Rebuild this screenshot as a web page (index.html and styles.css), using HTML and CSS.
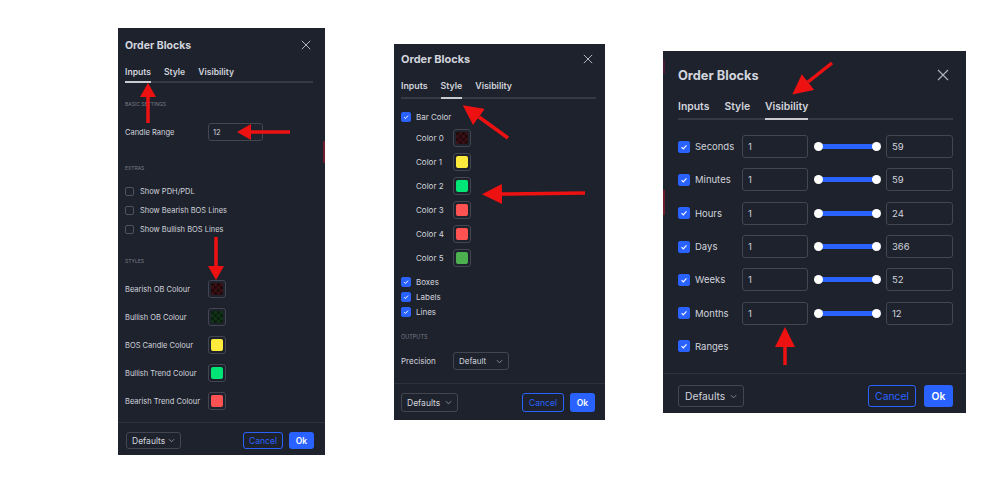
FILE: index.html
```html
<!DOCTYPE html>
<html>
<head>
  <link rel="stylesheet" href="styles.css">
</head>
<body>
  <div class="page">

    <!-- Inputs tab -->
    <div class="dlg dlg-s">
      <span class="chart-edge edge-right"></span>
      <div class="dlg-head">
        <span class="dlg-title">Order Blocks</span>
        <svg class="close" viewBox="0 0 12 12"><path d="M1 1l10 10M11 1L1 11" stroke="currentColor" stroke-width="1.2"/></svg>
      </div>
      <div class="tabs">
        <span class="tab">Inputs</span>
        <span class="tab">Style</span>
        <span class="tab">Visibility</span>
      </div>
      <div class="tab-line"><span class="tab-ind"></span></div>

      <div class="dlg-body">
        <div class="group">Basic Settings</div>
        <div class="row field-row">
          <span class="lbl">Candle Range</span>
          <span class="input">12</span>
        </div>

        <div class="group">Extras</div>
        <div class="row check-row"><span class="cb"></span><span>Show PDH/PDL</span></div>
        <div class="row check-row"><span class="cb"></span><span>Show Bearish BOS Lines</span></div>
        <div class="row check-row"><span class="cb"></span><span>Show Bullish BOS Lines</span></div>

        <div class="group">Styles</div>
        <div class="row color-row"><span class="lbl">Bearish OB Colour</span><span class="swatch"><span class="fill fill-red-t"></span></span></div>
        <div class="row color-row"><span class="lbl">Bullish OB Colour</span><span class="swatch"><span class="fill fill-green-t"></span></span></div>
        <div class="row color-row"><span class="lbl">BOS Candle Colour</span><span class="swatch"><span class="fill fill-yellow"></span></span></div>
        <div class="row color-row"><span class="lbl">Bullish Trend Colour</span><span class="swatch"><span class="fill fill-lime"></span></span></div>
        <div class="row color-row"><span class="lbl">Bearish Trend Colour</span><span class="swatch"><span class="fill fill-red"></span></span></div>
      </div>

      <div class="dlg-foot">
        <span class="btn btn-defaults">Defaults <svg class="chev" viewBox="0 0 8 5"><path d="M1 1l3 3 3-3" stroke="currentColor" fill="none"/></svg></span>
        <span class="btn btn-cancel">Cancel</span>
        <span class="btn btn-ok">Ok</span>
      </div>
    </div>

    <!-- Style tab -->
    <div class="dlg dlg-m">
      <div class="dlg-head">
        <span class="dlg-title">Order Blocks</span>
        <svg class="close" viewBox="0 0 12 12"><path d="M1 1l10 10M11 1L1 11" stroke="currentColor" stroke-width="1.2"/></svg>
      </div>
      <div class="tabs">
        <span class="tab">Inputs</span>
        <span class="tab">Style</span>
        <span class="tab">Visibility</span>
      </div>
      <div class="tab-line"><span class="tab-ind"></span></div>

      <div class="dlg-body">
        <div class="row check-row"><span class="cb on"><svg viewBox="0 0 10 10"><path d="M2.6 5.2l1.7 1.7 3.2-3.6" stroke="#fff" stroke-width="1.2" fill="none"/></svg></span><span>Bar Color</span></div>

        <div class="color-list">
          <div class="row color-row"><span class="lbl">Color 0</span><span class="swatch"><span class="fill fill-red-t"></span></span></div>
          <div class="row color-row"><span class="lbl">Color 1</span><span class="swatch"><span class="fill fill-yellow"></span></span></div>
          <div class="row color-row"><span class="lbl">Color 2</span><span class="swatch"><span class="fill fill-lime"></span></span></div>
          <div class="row color-row"><span class="lbl">Color 3</span><span class="swatch"><span class="fill fill-red"></span></span></div>
          <div class="row color-row"><span class="lbl">Color 4</span><span class="swatch"><span class="fill fill-red"></span></span></div>
          <div class="row color-row"><span class="lbl">Color 5</span><span class="swatch"><span class="fill fill-green"></span></span></div>
        </div>

        <div class="row check-row"><span class="cb on"><svg viewBox="0 0 10 10"><path d="M2.6 5.2l1.7 1.7 3.2-3.6" stroke="#fff" stroke-width="1.2" fill="none"/></svg></span><span>Boxes</span></div>
        <div class="row check-row"><span class="cb on"><svg viewBox="0 0 10 10"><path d="M2.6 5.2l1.7 1.7 3.2-3.6" stroke="#fff" stroke-width="1.2" fill="none"/></svg></span><span>Labels</span></div>
        <div class="row check-row"><span class="cb on"><svg viewBox="0 0 10 10"><path d="M2.6 5.2l1.7 1.7 3.2-3.6" stroke="#fff" stroke-width="1.2" fill="none"/></svg></span><span>Lines</span></div>

        <div class="group">Outputs</div>
        <div class="row field-row">
          <span class="lbl">Precision</span>
          <span class="select">Default <svg class="chev" viewBox="0 0 8 5"><path d="M1 1l3 3 3-3" stroke="currentColor" fill="none"/></svg></span>
        </div>
      </div>

      <div class="dlg-foot">
        <span class="btn btn-defaults">Defaults <svg class="chev" viewBox="0 0 8 5"><path d="M1 1l3 3 3-3" stroke="currentColor" fill="none"/></svg></span>
        <span class="btn btn-cancel">Cancel</span>
        <span class="btn btn-ok">Ok</span>
      </div>
    </div>

    <!-- Visibility tab -->
    <div class="dlg dlg-l">
      <span class="chart-edge edge-left edge-a"></span>
      <span class="chart-edge edge-left edge-b"></span>
      <div class="dlg-head">
        <span class="dlg-title">Order Blocks</span>
        <svg class="close" viewBox="0 0 12 12"><path d="M1 1l10 10M11 1L1 11" stroke="currentColor" stroke-width="1.1"/></svg>
      </div>
      <div class="tabs">
        <span class="tab">Inputs</span>
        <span class="tab">Style</span>
        <span class="tab">Visibility</span>
      </div>
      <div class="tab-line"><span class="tab-ind"></span></div>

      <div class="dlg-body" id="visRows"></div>

      <div class="dlg-foot">
        <span class="btn btn-defaults">Defaults <svg class="chev" viewBox="0 0 8 5"><path d="M1 1l3 3 3-3" stroke="currentColor" fill="none"/></svg></span>
        <span class="btn btn-cancel">Cancel</span>
        <span class="btn btn-ok">Ok</span>
      </div>
    </div>
  </div>

  <!-- red annotation arrows -->
  <svg class="notes" width="1000" height="500" viewBox="0 0 1000 500">
    <defs>
      <marker id="head" markerUnits="userSpaceOnUse" markerWidth="14" markerHeight="16" refX="0" refY="8" orient="auto">
        <path d="M0 0L14 8L0 16z" fill="#ee1111"/>
      </marker>
      <marker id="head-lg" markerUnits="userSpaceOnUse" markerWidth="20" markerHeight="20" refX="0" refY="10" orient="auto">
        <path d="M0 0L20 10L0 20z" fill="#ee1111"/>
      </marker>
    </defs>
    <g stroke="#ee1111" stroke-width="3.5">
      <line x1="148" y1="123" x2="148" y2="97" marker-end="url(#head)"/>
      <line x1="290" y1="132" x2="251" y2="132" marker-end="url(#head)"/>
      <line x1="216" y1="237" x2="216" y2="266" marker-end="url(#head)"/>
      <line x1="508" y1="138" x2="479" y2="117" marker-end="url(#head-lg)"/>
      <line x1="585" y1="193" x2="502" y2="194" marker-end="url(#head-lg)"/>
      <line x1="832" y1="63" x2="808" y2="82" marker-end="url(#head-lg)"/>
      <line x1="785" y1="365" x2="785" y2="347" marker-end="url(#head-lg)"/>
    </g>
  </svg>

  <script>
    // Visibility rows: label, min, max
    const ranges = [
      ['Seconds', 1, 59],
      ['Minutes', 1, 59],
      ['Hours', 1, 24],
      ['Days', 1, 366],
      ['Weeks', 1, 52],
      ['Months', 1, 12]
    ];

    const check = '<span class="cb on"><svg viewBox="0 0 10 10"><path d="M2.6 5.2l1.7 1.7 3.2-3.6" stroke="#fff" stroke-width="1.1" fill="none"/></svg></span>';
    const visRows = document.getElementById('visRows');

    ranges.forEach(([name, min, max]) => {
      const row = document.createElement('div');
      row.className = 'row vis-row';
      row.innerHTML = check +
        '<span class="lbl">' + name + '</span>' +
        '<span class="input">' + min + '</span>' +
        '<span class="slider"><span class="knob"></span><span class="knob"></span></span>' +
        '<span class="input input-max">' + max + '</span>';
      visRows.appendChild(row);
    });

    const last = document.createElement('div');
    last.className = 'row vis-row';
    last.innerHTML = check + '<span class="lbl">Ranges</span>';
    visRows.appendChild(last);
  </script>
</body>
</html>
```

FILE: styles.css
```css
body {
  margin: 0;
  background: #fff;
  font-family: Inter, "Noto Sans", sans-serif;
  color: #d1d4dc;
}

.page {
  display: flex;
  align-items: flex-start;
  padding-left: 118px;
}

.dlg {
  position: relative;
  display: flex;
  flex-direction: column;
  background: #1e222d;
}

.dlg-s {
  width: 207px;
  height: 427px;
  margin-top: 28px;
  font-size: 7.5px;
}

.dlg-m {
  width: 211px;
  height: 376px;
  margin-top: 44px;
  margin-left: 69px;
  font-size: 8px;
}

.dlg-l {
  width: 303px;
  height: 362px;
  margin-top: 51px;
  margin-left: 58px;
  font-size: 9.5px;
}

/* bits of the chart showing at the dialog edges */
.chart-edge {
  position: absolute;
  width: 2px;
  background: #6e1c2c;
}

.edge-right {
  right: 0;
  top: 113px;
  height: 22px;
}

.edge-left {
  left: 0;
}

.edge-a {
  top: 9px;
  height: 14px;
  background: #4a1a3a;
}

.edge-b {
  top: 139px;
  height: 25px;
}

/* header */
.dlg-head {
  display: flex;
  align-items: center;
  justify-content: space-between;
}

.dlg-title {
  font-weight: 700;
  color: #d1d4dc;
}

.close {
  color: #b2b5be;
}

.dlg-s .dlg-head {
  height: 34px;
  padding: 0 14px 0 7px;
}

.dlg-s .dlg-title {
  font-size: 10.5px;
}

.dlg-s .close,
.dlg-m .close {
  width: 10px;
  height: 10px;
}

.dlg-m .dlg-head {
  height: 30px;
  padding: 0 12px 0 7px;
}

.dlg-m .dlg-title {
  font-size: 11px;
}

.dlg-l .dlg-head {
  height: 48px;
  padding: 0 17px 0 15px;
}

.dlg-l .dlg-title {
  font-size: 12.8px;
}

.dlg-l .close {
  width: 12px;
  height: 12px;
}

/* tabs */
.tabs {
  display: flex;
  align-items: center;
  font-weight: 600;
}

.dlg-s .tabs {
  height: 19px;
  gap: 13px;
  padding-left: 7px;
  font-size: 8.6px;
}

.dlg-m .tabs {
  height: 23px;
  gap: 13px;
  padding-left: 7px;
  font-size: 8.8px;
}

.dlg-l .tabs {
  height: 14px;
  gap: 15px;
  padding: 0 0 5px 15px;
  font-size: 10.4px;
}

.tab-line {
  display: flex;
  height: 2px;
  background: #363a45;
}

.tab-ind {
  background: #c8cad0;
}

.dlg-s .tab-line {
  margin: 0 12px 0 7px;
}

.dlg-s .tab-ind {
  width: 26px;
}

.dlg-m .tab-line {
  margin: 0 9px 0 7px;
}

.dlg-m .tab-ind {
  width: 21px;
  margin-left: 40px;
}

.dlg-l .tab-line {
  margin: 0 13px 0 15px;
}

.dlg-l .tab-ind {
  width: 43px;
  margin-left: 87px;
}

/* body */
.dlg-body {
  display: flex;
  flex-direction: column;
}

.dlg-s .dlg-body {
  padding: 11px 7px 0;
}

.dlg-m .dlg-body {
  padding: 10px 7px 0;
}

.dlg-l .dlg-body {
  padding: 10px 13px 0 15px;
}

.group {
  display: flex;
  align-items: center;
  text-transform: uppercase;
  color: #787b86;
}

.dlg-s .group {
  height: 20px;
  margin: 12px 0 4px;
  font-size: 5px;
}

.dlg-s .group:first-child {
  margin-top: 0;
}

.dlg-m .group {
  height: 16px;
  margin: 10px 0 7px;
  font-size: 5.5px;
}

.row {
  display: flex;
  align-items: center;
}

.dlg-s .lbl {
  width: 83px;
}

.dlg-s .field-row {
  height: 18px;
  margin: 5px 0;
}

.dlg-s .check-row {
  height: 19px;
  gap: 6px;
}

.dlg-s .color-row {
  height: 28px;
}

.dlg-m .check-row {
  height: 15px;
  gap: 5px;
}

.dlg-m .color-list {
  display: flex;
  flex-direction: column;
  padding-left: 15px;
  margin: 2px 0 4px;
}

.dlg-m .color-list .lbl {
  width: 37px;
}

.dlg-m .color-row {
  height: 24px;
}

.dlg-m .field-row {
  height: 18px;
}

.dlg-m .field-row .lbl {
  width: 52px;
}

/* checkboxes */
.cb {
  display: flex;
  flex-shrink: 0;
  box-sizing: border-box;
  border: 1px solid #50535e;
  border-radius: 2px;
}

.cb svg {
  width: 100%;
  height: 100%;
}

.cb.on {
  background: #2962ff;
  border-color: #2962ff;
}

.dlg-s .cb {
  width: 9px;
  height: 9px;
}

.dlg-m .cb {
  width: 10px;
  height: 10px;
}

.dlg-l .cb {
  width: 12px;
  height: 12px;
}

/* fields */
.input,
.select {
  display: flex;
  align-items: center;
  box-sizing: border-box;
  border: 1px solid #434651;
  border-radius: 3px;
}

.dlg-s .input {
  width: 55px;
  height: 18px;
  padding-left: 4px;
}

.select {
  justify-content: space-between;
  width: 56px;
  height: 18px;
  padding: 0 5px;
}

.chev {
  width: 7px;
  height: 5px;
  color: #9598a1;
}

/* colour swatches */
.swatch {
  display: flex;
  align-items: center;
  justify-content: center;
  box-sizing: border-box;
  width: 18px;
  height: 18px;
  border: 1px solid #434651;
  border-radius: 3px;
}

.fill {
  width: 12px;
  height: 12px;
  border-radius: 2px;
}

.fill-yellow { background: #ffeb3b; }
.fill-lime { background: #00e676; }
.fill-red { background: #ff5252; }
.fill-green { background: #4caf50; }

.fill-red-t {
  background: conic-gradient(#3b1014 25%, #22090c 0 50%, #3b1014 0 75%, #22090c 0) 0 0 / 6px 6px;
}

.fill-green-t {
  background: conic-gradient(#0f3314 25%, #0a1f0e 0 50%, #0f3314 0 75%, #0a1f0e 0) 0 0 / 6px 6px;
}

/* visibility rows */
.vis-row {
  height: 33.3px;
  gap: 0;
}

.vis-row .cb {
  margin-right: 5px;
}

.vis-row .lbl {
  width: 47px;
}

.dlg-l .input {
  width: 66px;
  height: 23px;
  padding-left: 5px;
}

.dlg-l .input-max {
  width: 67px;
}

.slider {
  display: flex;
  justify-content: space-between;
  align-items: center;
  width: 67px;
  height: 9px;
  margin: 0 5px 0 6px;
  background: linear-gradient(#2962ff, #2962ff) center / calc(100% - 8px) 5px no-repeat;
}

.knob {
  width: 9px;
  height: 9px;
  border-radius: 50%;
  background: #fff;
}

/* footer */
.dlg-foot {
  display: flex;
  align-items: center;
  margin-top: auto;
  border-top: 1px solid #2e323e;
}

.btn {
  display: flex;
  align-items: center;
  justify-content: center;
  box-sizing: border-box;
  height: 100%;
  border-radius: 3px;
}

.btn-defaults {
  justify-content: space-between;
  margin-right: auto;
  border: 1px solid #434651;
  padding: 0 5px;
}

.btn-cancel {
  border: 1px solid #2962ff;
  color: #2962ff;
}

.btn-ok {
  background: #2962ff;
  color: #fff;
  font-weight: 600;
}

.dlg-s .dlg-foot {
  height: 17px;
  padding: 9px 11px 6px 8px;
  gap: 6px;
  font-size: 8.5px;
}

.dlg-s .btn-defaults { width: 55px; }
.dlg-s .btn-cancel { width: 40px; }
.dlg-s .btn-ok { width: 25px; }

.dlg-m .dlg-foot {
  height: 19px;
  padding: 9px 10px 8px 7px;
  gap: 6px;
  font-size: 8.5px;
}

.dlg-m .btn-defaults { width: 57px; }
.dlg-m .btn-cancel { width: 42px; }
.dlg-m .btn-ok { width: 25px; }

.dlg-l .dlg-foot {
  height: 22px;
  padding: 11px 13px 6px 15px;
  gap: 8px;
  font-size: 10.3px;
}

.dlg-l .btn-defaults { width: 66px; padding: 0 6px; }
.dlg-l .btn-cancel { width: 48px; }
.dlg-l .btn-ok { width: 29px; }

.notes {
  position: absolute;
  top: 0;
  left: 0;
  pointer-events: none;
}
```
